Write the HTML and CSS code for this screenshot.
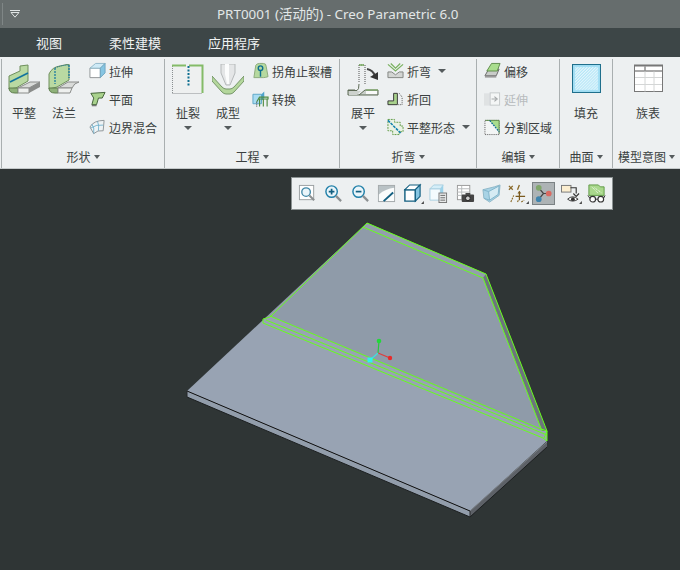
FILE: index.html
```html
<!DOCTYPE html>
<html lang="zh-CN">
<head>
  <meta charset="UTF-8">
  <title>PRT0001 - Creo Parametric 6.0</title>
  <link rel="stylesheet" href="styles.css">
</head>
<body>

  <!-- title bar -->
  <div class="titlebar">
    <div class="qat">
      <svg class="qat-icon" viewBox="0 0 10 8">
        <path d="M0,0.5 H10" stroke="#dfe4e4"/>
        <path d="M1,2.5 H9 L5,7.2 Z" fill="none" stroke="#dfe4e4"/>
      </svg>
    </div>
    <div class="title">PRT0001 (活动的) - Creo Parametric 6.0</div>
  </div>

  <!-- tabs -->
  <div class="tabs">
    <span class="tab">视图</span>
    <span class="tab">柔性建模</span>
    <span class="tab">应用程序</span>
  </div>

  <!-- ribbon -->
  <div class="ribbon">

    <div class="group group-shape">
      <div class="group-body">
        <div class="big">
          <svg class="big-icon" viewBox="0 0 32 32">
            <polygon points="1,12 12,7 12,2 20,1 20,17 8,24 1,25" fill="#b9d9a2" stroke="#6f8f5c"/>
            <line x1="2" y1="18" x2="20" y2="9" stroke="#12749f" stroke-width="1.6"/>
            <path d="M1,24 Q1,29 7,29 L10,29 L10,24 L7,24 Z" fill="#8fb27a" stroke="#5d7d4c"/>
            <polygon points="10,24 22,18 32,18 21,24" fill="#d9dbd9" stroke="#8a8c8a"/>
            <polygon points="10,24 21,24 21,29 10,29" fill="#eef0ee" stroke="#8a8c8a"/>
            <polygon points="21,24 32,18 32,23 21,29" fill="#8a8c8a"/>
          </svg>
          <span class="big-label">平整</span>
        </div>
        <div class="big">
          <svg class="big-icon" viewBox="0 0 32 32">
            <path d="M1,10 Q4,3 12,2 L21,0 L21,16 L9,23 L1,25 Z" fill="#b9d9a2" stroke="#6f8f5c"/>
            <path d="M7,4 V20 M21,1 V14" stroke="#12749f" stroke-width="1.2" stroke-dasharray="2 1" fill="none"/>
            <path d="M7,4 Q14,1 21,1" stroke="#12749f" stroke-dasharray="1 1" fill="none"/>
            <path d="M1,24 Q1,29 7,29 L10,29 L10,24 L7,24 Z" fill="#8fb27a" stroke="#5d7d4c"/>
            <path d="M10,24 L20,18 L31,18 Q26,19 24,24 Z" fill="#d9dbd9" stroke="#8a8c8a"/>
            <path d="M10,24 H24 L22,29 H10 Z" fill="#eef0ee" stroke="#8a8c8a"/>
          </svg>
          <span class="big-label">法兰</span>
        </div>
        <div class="smalls">
          <div class="small">
            <svg class="small-icon" viewBox="0 0 18 18">
              <polygon points="1,6 12,6 12,16 1,16" fill="#fff" stroke="#8f9496"/>
              <polygon points="1,6 7,1 17,1 12,6" fill="#cfeaf6" stroke="#8fb7c9"/>
              <polygon points="12,6 17,1 17,11 12,16" fill="#86c5e2" stroke="#6fa6c0"/>
            </svg>
            <span>拉伸</span>
          </div>
          <div class="small">
            <svg class="small-icon" viewBox="0 0 18 18">
              <polygon points="2,3 17,2 14,8 10,8 8,15 3,15 5,8" fill="#a9d28d" stroke="#3f5f35"/>
              <line x1="3" y1="16" x2="8" y2="16" stroke="#777" stroke-width="1.4"/>
            </svg>
            <span>平面</span>
          </div>
          <div class="small">
            <svg class="small-icon" viewBox="0 0 18 18">
              <path d="M1,9 Q5,2 16,2 L15,13 Q9,12 5,16 Z" fill="#eef3f5" stroke="#8d9497"/>
              <path d="M3,6 Q6,9 5,16 M9,3 Q11,7 10,13 M2,10 Q8,6 15,7" fill="none" stroke="#5ba6c6" stroke-width=".8"/>
            </svg>
            <span>边界混合</span>
          </div>
        </div>
      </div>
      <div class="group-label">形状<i class="arrow"></i></div>
    </div>

    <div class="group group-eng">
      <div class="group-body">
        <div class="big">
          <svg class="big-icon" viewBox="0 0 32 32">
            <rect x="1" y="2" width="29" height="27" fill="#eef0f0"/>
            <path d="M0.5,29.5 H30 M0.5,2 V29" stroke="#8a8f90" stroke-dasharray="1 1" fill="none"/>
            <path d="M0,1.5 H14 M17,1.5 H30.5 V29" stroke="#84bb68" stroke-width="2" fill="none"/>
            <path d="M16.5,2 V23" stroke="#0f6f8f" stroke-width="2" stroke-dasharray="2 1.5" fill="none"/>
          </svg>
          <span class="big-label">扯裂</span>
          <i class="arrow arrow-below"></i>
        </div>
        <div class="big">
          <svg class="big-icon" viewBox="0 0 32 32">
            <path d="M9,0 H23 V9 L18,21 H14 L9,9 Z" fill="#e4e6e7" stroke="#b5b9ba"/>
            <path d="M13,0 V10 L15,20 H17 L17,0 Z" fill="#fbfcfc"/>
            <path d="M0,12 L10,23 Q12,25 14,25 H18 Q20,25 22,23 L32,12 V17 L22,28 Q20,30 18,30 H14 Q12,30 10,28 L0,17 Z" fill="#b4d79c" stroke="#76976a"/>
          </svg>
          <span class="big-label">成型</span>
          <i class="arrow arrow-below"></i>
        </div>
        <div class="smalls">
          <div class="small">
            <svg class="small-icon" viewBox="0 0 18 18">
              <path d="M2,16 L4,3 Q5,1 8,1 H12 Q15,1 15,4 L17,15 Q14,16 12,16 Z" fill="#b6d99f" stroke="#8aa97a"/>
              <circle cx="9" cy="6" r="2.4" fill="none" stroke="#0f6f8f" stroke-width="1.5"/>
              <line x1="9" y1="8" x2="9" y2="15" stroke="#0f6f8f" stroke-width="1.5"/>
            </svg>
            <span>拐角止裂槽</span>
          </div>
          <div class="small">
            <svg class="small-icon" viewBox="0 0 18 18">
              <polygon points="1,4 10,4 10,14 1,14" fill="#a9dcf2" stroke="#5ba6c6"/>
              <polygon points="10,4 13,1 13,8 10,11" fill="#4ea3cb"/>
              <path d="M5,12 L8,7 H17 V9 H8 V17 M12,9 V17 M16,9 V17" fill="none" stroke="#4f8a40" stroke-width="1.2"/>
              <path d="M5,12 V17" stroke="#333" stroke-dasharray="1 1"/>
            </svg>
            <span>转换</span>
          </div>
        </div>
      </div>
      <div class="group-label">工程<i class="arrow"></i></div>
    </div>

    <div class="group group-bend">
      <div class="group-body">
        <div class="big">
          <svg class="big-icon" viewBox="0 0 32 32">
            <path d="M12,1 H18 V20 M12,1 V18" fill="none" stroke="#555" stroke-dasharray="1 1"/>
            <path d="M12,1 H17" stroke="#78ad5f" stroke-width="1.5"/>
            <path d="M8,26 H1 V31 H31 V26 H18 L12,31" fill="#c9cfc9" stroke="#5d6a55"/>
            <path d="M1,26.5 H10 Q12,26 12,20" fill="none" stroke="#5d6a55"/>
            <path d="M2,27 H14 L10,31 H2 Z" fill="#cdd2cd"/>
            <path d="M19,27 H30 V30 H19 Z" fill="#fafafa"/>
            <path d="M19,26 H31" stroke="#78ad5f"/>
            <path d="M20,5 Q26,6 28,12" fill="none" stroke="#444" stroke-width="2"/>
            <polygon points="23,13 31,8 31,16" fill="#333"/>
          </svg>
          <span class="big-label">展平</span>
          <i class="arrow arrow-below"></i>
        </div>
        <div class="smalls">
          <div class="small">
            <svg class="small-icon" viewBox="0 0 18 18">
              <path d="M1,2 L9,9 L17,2 M4,1 L9,6 L14,1" fill="none" stroke="#79b15f" stroke-width="1.3"/>
              <path d="M1,16 V10 L5,10 L9,13 L13,10 H17 V16 Z" fill="#d3d5d3" stroke="#808380"/>
            </svg>
            <span>折弯</span><i class="arrow arrow-inline"></i>
          </div>
          <div class="small">
            <svg class="small-icon" viewBox="0 0 18 18">
              <path d="M1,15 V11 H7 V3 H11 V15 Z" fill="#a9d28d" stroke="#333"/>
              <path d="M13,3 L16,7 V15 H12" fill="none" stroke="#555" stroke-dasharray="1 1"/>
            </svg>
            <span>折回</span>
          </div>
          <div class="small">
            <svg class="small-icon" viewBox="0 0 18 18">
              <path d="M1,1 H8 V4 H14 V8 H17 V14 H13 V17 H6 V13 H1 Z" fill="#eaf2e4" stroke="#5f9a45" stroke-dasharray="2 1"/>
              <line x1="1" y1="2" x2="15" y2="16" stroke="#0f7fae" stroke-width="1.6" stroke-dasharray="3 1"/>
            </svg>
            <span>平整形态</span><i class="arrow arrow-inline"></i>
          </div>
        </div>
      </div>
      <div class="group-label">折弯<i class="arrow"></i></div>
    </div>

    <div class="group group-edit">
      <div class="group-body">
        <div class="smalls">
          <div class="small">
            <svg class="small-icon" viewBox="0 0 18 18">
              <polygon points="1,14 5,7 16,7 13,14" fill="#c9ccc9" stroke="#666"/>
              <polygon points="1,16 13,16 13,14 1,14" fill="#999"/>
              <polygon points="3,9 8,1 17,1 14,9" fill="#a9dd8d" stroke="#5d8a48"/>
            </svg>
            <span>偏移</span>
          </div>
          <div class="small small-off">
            <svg class="small-icon" viewBox="0 0 18 18">
              <rect x="0" y="3" width="6" height="13" fill="#dfe2e3"/>
              <rect x="6.5" y="2.5" width="10" height="13" fill="#f4f6f6" stroke="#c4c8c9"/>
              <path d="M8,9 H13 M11,6.5 L14,9 L11,11.5" fill="none" stroke="#a5a9aa" stroke-width="1.2"/>
            </svg>
            <span>延伸</span>
          </div>
          <div class="small">
            <svg class="small-icon" viewBox="0 0 18 18">
              <rect x="1" y="2" width="15" height="15" fill="#f3f5f5" stroke="#555" stroke-dasharray="1 1"/>
              <polygon points="6,2 16,2 16,13" fill="#a9dd8d"/>
              <path d="M1.5,2 H16 V16" fill="none" stroke="#5d8a48"/>
              <line x1="6" y1="2" x2="16" y2="14" stroke="#0f6f8f" stroke-width="1.4" stroke-dasharray="2 1"/>
            </svg>
            <span>分割区域</span>
          </div>
        </div>
      </div>
      <div class="group-label">编辑<i class="arrow"></i></div>
    </div>

    <div class="group group-surf">
      <div class="group-body">
        <div class="big">
          <svg class="big-icon" viewBox="0 0 28 28">
            <defs>
              <pattern id="hatch" width="2" height="2" patternUnits="userSpaceOnUse" patternTransform="rotate(45)">
                <rect width="2" height="2" fill="#b5e6f7"/>
                <rect width="1" height="2" fill="#e4f6fc"/>
              </pattern>
            </defs>
            <rect x="0.5" y="0.5" width="27" height="27" fill="#a5e0f5" stroke="#1f6f8c"/>
            <rect x="3" y="3" width="22" height="22" fill="url(#hatch)"/>
          </svg>
          <span class="big-label">填充</span>
        </div>
      </div>
      <div class="group-label">曲面<i class="arrow"></i></div>
    </div>

    <div class="group group-model">
      <div class="group-body">
        <div class="big">
          <svg class="big-icon" viewBox="0 0 29 28">
            <rect x="0.5" y="1" width="28" height="26" fill="#fff" stroke="#777"/>
            <rect x="0" y="0" width="29" height="2" fill="#777"/>
            <path d="M1,6.5 H28" stroke="#555"/>
            <path d="M1,13 H28 M1,20 H28 M11,7 V27 M20,7 V27" stroke="#d4d6d6"/>
            <path d="M11,2 V6" stroke="#555"/>
          </svg>
          <span class="big-label">族表</span>
        </div>
      </div>
      <div class="group-label">模型意图<i class="arrow"></i></div>
    </div>

  </div>

  <!-- graphics area -->
  <div class="viewport">
    <svg class="model" viewBox="0 169 680 401">
      <!-- plate sides -->
      <polygon points="187,391 470,511 470,517 187,397" fill="#929dab"/>
      <polygon points="470,511 547,442 547,447 470,517" fill="#5d6167"/>
      <!-- flange first, flat part laps over its lower edge -->
      <polygon points="367,223 486,274 547,434 547,441 263,323 263,320" fill="#8f9ba9"/>
      <polygon points="187,391 263,320 270,316 547,431 547,441 470,511" fill="#98a3b3"/>
      <polygon points="367,223 486,274 483,278 363,228" fill="#939eac"/>
      <polygon points="486,274 483,278 542,431 547,431" fill="#6d747d"/>
      <polygon points="363,228 483,278 542,431 270,316" fill="#8f9ba9"/>
      <!-- black edges -->
      <line x1="187" y1="391" x2="470" y2="511" stroke="#111"/>
      <line x1="470" y1="511" x2="547" y2="442" stroke="#7a7f85"/>
      <polyline points="187,397 470,517 547,447" fill="none" stroke="#1c1f20"/>
      <line x1="187" y1="391" x2="187" y2="397" stroke="#26292b"/>
      <line x1="470" y1="511" x2="470" y2="517" stroke="#26292b"/>
      <!-- selected edges -->
      <g fill="none" stroke="#66ff1a">
        <polyline points="270,317 367,223 486,274 547,431 547,441"/>
        <polyline points="363,227 483,278 542,431"/>
        <line x1="270" y1="316" x2="543" y2="430"/>
        <line x1="266" y1="320" x2="547" y2="435"/>
        <polyline points="263,319 263,323 543,438 547,441"/>
        <line x1="263" y1="319" x2="270" y2="317"/>
        <polyline points="541,429 547,431 544,438"/>
      </g>
      <!-- csys triad -->
      <line x1="378" y1="353" x2="379" y2="341" stroke="#28c83c" stroke-width="1.2"/>
      <line x1="378" y1="353" x2="390" y2="358" stroke="#e03c3c" stroke-width="1.2"/>
      <line x1="378" y1="353" x2="370" y2="360" stroke="#3ce0e0" stroke-width="1.2"/>
      <circle cx="379" cy="341" r="2.3" fill="#22d83a"/>
      <circle cx="390" cy="358" r="2.2" fill="#e82a2a"/>
      <rect x="367.5" y="357.5" width="5" height="5" fill="#2ff0f0"/>
    </svg>

    <!-- floating toolbar -->
    <div class="view-tools">
      <span class="tool">
        <svg viewBox="0 0 20 20">
          <rect x="1.5" y="1.5" width="15" height="15" fill="#fff" stroke="#9a9fa1"/>
          <circle cx="8.5" cy="8.5" r="4.5" fill="#eaf5fa" stroke="#3f87a6" stroke-width="1.4"/>
          <line x1="12" y1="12" x2="17" y2="17" stroke="#8c9092" stroke-width="2.2"/>
        </svg>
      </span>
      <span class="tool">
        <svg viewBox="0 0 20 20">
          <circle cx="8" cy="8" r="6" fill="#eaf5fa" stroke="#1f7fa8" stroke-width="1.5"/>
          <path d="M5,8 H11 M8,5 V11" stroke="#135f80" stroke-width="1.8"/>
          <line x1="12.5" y1="12.5" x2="18" y2="18" stroke="#8c9092" stroke-width="2.4"/>
        </svg>
      </span>
      <span class="tool">
        <svg viewBox="0 0 20 20">
          <circle cx="8" cy="8" r="6" fill="#eaf5fa" stroke="#1f7fa8" stroke-width="1.5"/>
          <path d="M5,8 H11" stroke="#135f80" stroke-width="1.8"/>
          <line x1="12.5" y1="12.5" x2="18" y2="18" stroke="#8c9092" stroke-width="2.4"/>
        </svg>
      </span>
      <span class="tool">
        <svg viewBox="0 0 20 20">
          <rect x="1.5" y="1.5" width="17" height="17" fill="#b9c2c5" stroke="#a5aaac"/>
          <path d="M2,11 Q9,5 18,4 V18 H2 Z" fill="#fafcfc"/>
          <line x1="7" y1="18" x2="17" y2="9" stroke="#135f80" stroke-width="2"/>
        </svg>
      </span>
      <span class="tool">
        <svg viewBox="0 0 20 20">
          <polygon points="2,6 13,6 13,18 2,18" fill="#fff" stroke="#135f80" stroke-width="1.5"/>
          <polygon points="2,6 7,1 18,1 13,6" fill="#fff" stroke="#135f80" stroke-width="1.2"/>
          <polygon points="13,6 18,1 18,13 13,18" fill="#86c5e2" stroke="#135f80" stroke-width="1.2"/>
          <polygon points="22,21 22,18 19,21" fill="#444"/>
        </svg>
      </span>
      <span class="tool">
        <svg viewBox="0 0 20 20">
          <polygon points="1,5 12,5 12,17 1,17" fill="#f4fbfe" stroke="#a9cfe0"/>
          <polygon points="1,5 5,1 15,1 12,5" fill="#d5eef8" stroke="#a9cfe0"/>
          <polygon points="12,5 15,1 15,10 12,12" fill="#9bd2ea"/>
          <rect x="10.5" y="9.5" width="8" height="10" fill="#e8eaea" stroke="#777"/>
          <path d="M12,12 H17 M12,14.5 H17 M12,17 H17" stroke="#666"/>
        </svg>
      </span>
      <span class="tool">
        <svg viewBox="0 0 20 20">
          <rect x="1.5" y="1.5" width="13" height="15" fill="#fff" stroke="#999"/>
          <path d="M1,5 H14 M1,8.5 H14 M1,12 H8 M6,2 V16" stroke="#b5b8b9"/>
          <rect x="6" y="11" width="13" height="8" rx="1" fill="#444"/>
          <rect x="10" y="9.5" width="5" height="2" fill="#444"/>
          <circle cx="12.5" cy="15" r="2.5" fill="#ccc" stroke="#222"/>
        </svg>
      </span>
      <span class="tool">
        <svg viewBox="0 0 20 20">
          <polygon points="1,6 13,3 19,1 18,12 8,19 2,15" fill="#a8d3e5" stroke="#8eb6c7"/>
          <polygon points="7,8 18,2 17,11 8,17" fill="#d6ebf3" stroke="#7fb3c9"/>
          <path d="M1,6 L7,8 M2,15 L8,17" stroke="#7fb3c9"/>
        </svg>
      </span>
      <span class="tool">
        <svg viewBox="0 0 20 20">
          <path d="M1,2 L5,6 M5,2 L1,6" stroke="#8a6a2a" stroke-width="1.4"/>
          <path d="M10,6 L12,1" stroke="#8a6a2a" stroke-width="1.4"/>
          <path d="M12,8 V17 M8,13 H18" stroke="#7a5a1f" stroke-width="1.3"/>
          <path d="M3,19 L6,12 M10,19 L11,17 M14,19 L17,17" stroke="#8a6a2a" stroke-width="1.2" stroke-dasharray="2 1"/>
          <polygon points="12,7 10,10 14,10" fill="#7a5a1f"/>
          <polygon points="22,21 22,18 19,21" fill="#444"/>
        </svg>
      </span>
      <span class="tool tool-on">
        <svg viewBox="0 0 20 20">
          <path d="M5,4 L10,10 L5,16 M10,10 H15" fill="none" stroke="#444" stroke-width="1.3"/>
          <circle cx="5" cy="4" r="3" fill="#7fa66a"/>
          <circle cx="15.5" cy="10" r="3" fill="#d96a62"/>
          <circle cx="5" cy="16" r="3" fill="#3f84ad"/>
        </svg>
      </span>
      <span class="tool">
        <svg viewBox="0 0 20 20">
          <rect x="0.5" y="1.5" width="10" height="7" fill="#fbeed0" stroke="#777"/>
          <path d="M10,4 H16 V10 M13,10 L16,13 L19,10" fill="none" stroke="#333" stroke-width="1.2"/>
          <path d="M7,16 Q12,11 18,16 Q12,20 7,16 Z" fill="#fff" stroke="#333"/>
          <circle cx="12.5" cy="16" r="2" fill="#333"/>
          <polygon points="22,21 22,18 19,21" fill="#444"/>
        </svg>
      </span>
      <span class="tool">
        <svg viewBox="0 0 20 20">
          <path d="M2,1 H12 L14,3 H18 V12 H2 Z" fill="#a9d88c" stroke="#5f9a45"/>
          <path d="M5,3 L12,10 M8,4 L15,9" stroke="#fff" stroke-dasharray="1 1"/>
          <circle cx="6" cy="16" r="3" fill="#fff" stroke="#333" stroke-width="1.2"/>
          <circle cx="14.5" cy="16" r="3" fill="#fff" stroke="#333" stroke-width="1.2"/>
          <path d="M9,16 H11.5 M3,15 L1,12 M17.5,15 L19,12" stroke="#333"/>
        </svg>
      </span>
    </div>
  </div>

</body>
</html>
```

FILE: styles.css
```css
* {
  box-sizing: border-box;
}

body {
  margin: 0;
  width: 680px;
  height: 570px;
  overflow: hidden;
  display: flex;
  flex-direction: column;
  background: #2f3535;
  font-family: "Noto Sans CJK SC", "Noto Sans", sans-serif;
  font-size: 12px;
  color: #3a3f40;
}

.titlebar {
  height: 28px;
  flex: none;
  display: flex;
  align-items: center;
  background: #666d6d;
  position: relative;
}

.qat {
  height: 22px;
  margin-left: 2px;
  padding-left: 7px;
  border-left: 1px solid #7f8686;
  display: flex;
  align-items: center;
}

.qat-icon {
  width: 10px;
  height: 8px;
}

.title {
  position: absolute;
  left: 217px;
  top: 0;
  line-height: 28px;
  font-family: "Noto Sans", "Noto Sans CJK SC", sans-serif;
  font-size: 13.4px;
  color: #e2e7e7;
  white-space: nowrap;
}

.tabs {
  height: 29px;
  flex: none;
  display: flex;
  align-items: center;
  padding-left: 36px;
  gap: 47px;
  background: #3d4647;
  color: #f0f3f3;
  font-size: 13px;
}

.ribbon {
  height: 112px;
  flex: none;
  display: flex;
  padding-top: 2px;
  background: #edf0f1;
  border-bottom: 1px solid #c4c9ca;
}

.group {
  height: 109px;
  display: flex;
  flex-direction: column;
  border-left: 1px solid #a9afb0;
}

.group-shape { width: 163px; margin-left: 1px; }
.group-eng { width: 175px; }
.group-bend { width: 137px; }
.group-edit { width: 83px; }
.group-surf { width: 53px; }
.group-model { width: 68px; }

.group-body {
  height: 86px;
  display: flex;
}

.group-shape .group-body { padding-left: 2px; }
.group-eng .group-body { padding-left: 3px; }
.group-bend .group-body { padding-left: 3px; }
.group-edit .group-body { padding-left: 7px; }
.group-surf .group-body { padding-left: 6px; }
.group-model .group-body { padding-left: 15px; }

.group-label {
  height: 23px;
  display: flex;
  align-items: center;
  justify-content: center;
  line-height: 22px;
  white-space: nowrap;
}

.big {
  width: 40px;
  display: flex;
  flex-direction: column;
  align-items: center;
  padding-top: 5px;
}

.big-icon {
  width: 32px;
  height: 32px;
  display: block;
}

.group-surf .big-icon,
.group-model .big-icon {
  width: 29px;
  height: 29px;
}

.big-label {
  margin-top: 9px;
  line-height: 16px;
  white-space: nowrap;
}

.group-surf .big-label,
.group-model .big-label {
  margin-top: 12px;
}

.smalls {
  display: flex;
  flex-direction: column;
  margin: -2px 0 0 5px;
}

.group-eng .smalls,
.group-bend .smalls {
  margin-left: 4px;
}

.group-edit .smalls {
  margin-left: 0;
}

.small {
  height: 28px;
  display: flex;
  align-items: center;
  gap: 3px;
  white-space: nowrap;
}

.small-off {
  color: #b7bbbd;
}

.small-icon {
  width: 17px;
  height: 18px;
  flex: none;
}

.arrow {
  display: inline-block;
  width: 0;
  height: 0;
  margin-left: 3px;
  border-left: 3.5px solid transparent;
  border-right: 3.5px solid transparent;
  border-top: 4px solid #555b5d;
}

.arrow-below {
  margin: 5px 0 0;
  border-left-width: 4px;
  border-right-width: 4px;
}

.arrow-inline {
  margin-left: 4px;
  border-left-width: 4px;
  border-right-width: 4px;
}

.viewport {
  flex: 1;
  position: relative;
  background: #2f3535;
}

.model {
  display: block;
  width: 680px;
  height: 401px;
}

.view-tools {
  position: absolute;
  left: 291px;
  top: 8px;
  width: 322px;
  height: 33px;
  padding: 0 4px;
  display: flex;
  align-items: center;
  justify-content: space-between;
  background: #edf0f1;
  border: 1px solid #8b9292;
}

.tool {
  width: 23px;
  height: 23px;
  display: flex;
  align-items: center;
  justify-content: center;
  border: 1px solid transparent;
}

.tool svg {
  width: 19px;
  height: 19px;
  overflow: visible;
}

.tool-on {
  background: #adb3b5;
  border-color: #7b8284;
}
```
